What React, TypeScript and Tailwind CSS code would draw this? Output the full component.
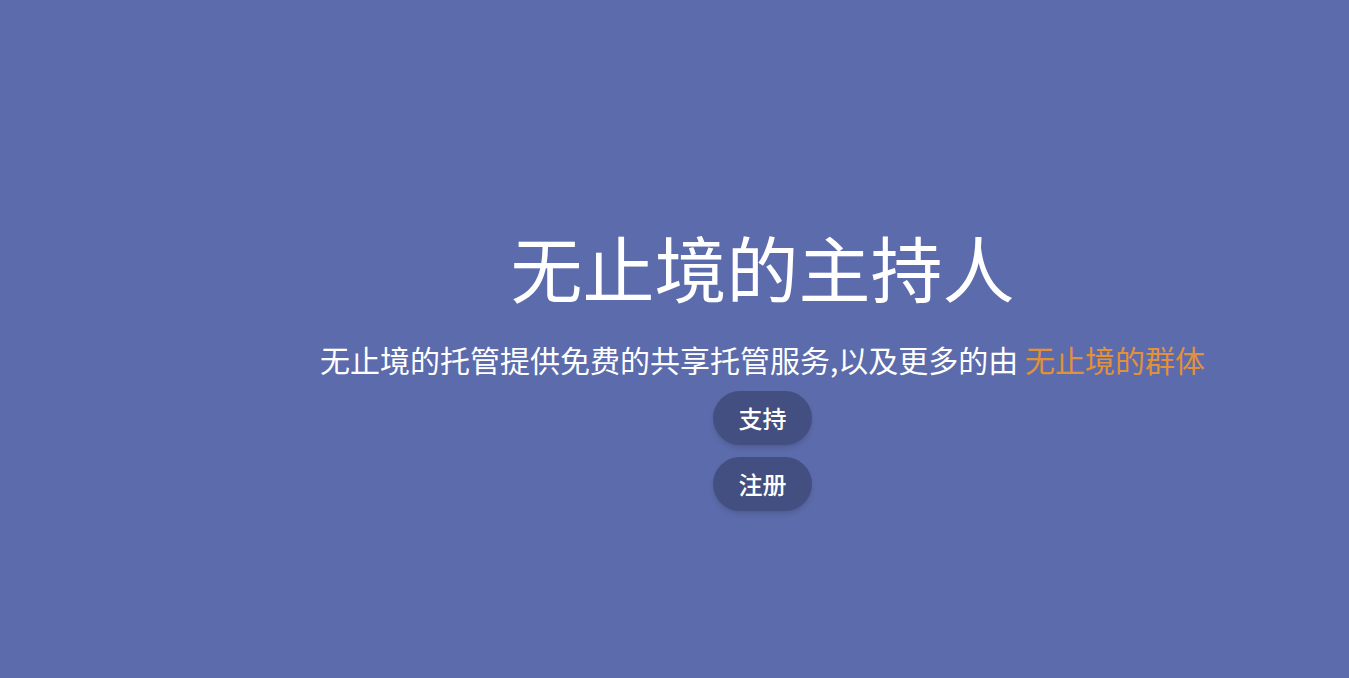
export default function App() {
  return (
    <div
      className="h-[678px] w-full bg-[#5c6bab] flex flex-col items-center pt-[219px] pl-[176px] text-white"
      style={{ fontFamily: '"Noto Sans CJK SC", "Noto Sans", sans-serif' }}
    >
      <h1 className="text-[72px] leading-[94px] font-normal">无止境的主持人</h1>
      <p className="text-[30px] leading-[42px] mt-[25px]">
        无止境的托管提供免费的共享托管服务,以及更多的由{" "}
        <span className="text-[#e0913a]">无止境的群体</span>
      </p>
      <div className="flex flex-col items-center gap-[12px] mt-[11px]">
        <button className="w-[99px] h-[54px] rounded-full bg-[#434f80] text-[24px] font-medium text-white shadow-md">
          支持
        </button>
        <button className="w-[99px] h-[54px] rounded-full bg-[#434f80] text-[24px] font-medium text-white shadow-md">
          注册
        </button>
      </div>
    </div>
  );
}
